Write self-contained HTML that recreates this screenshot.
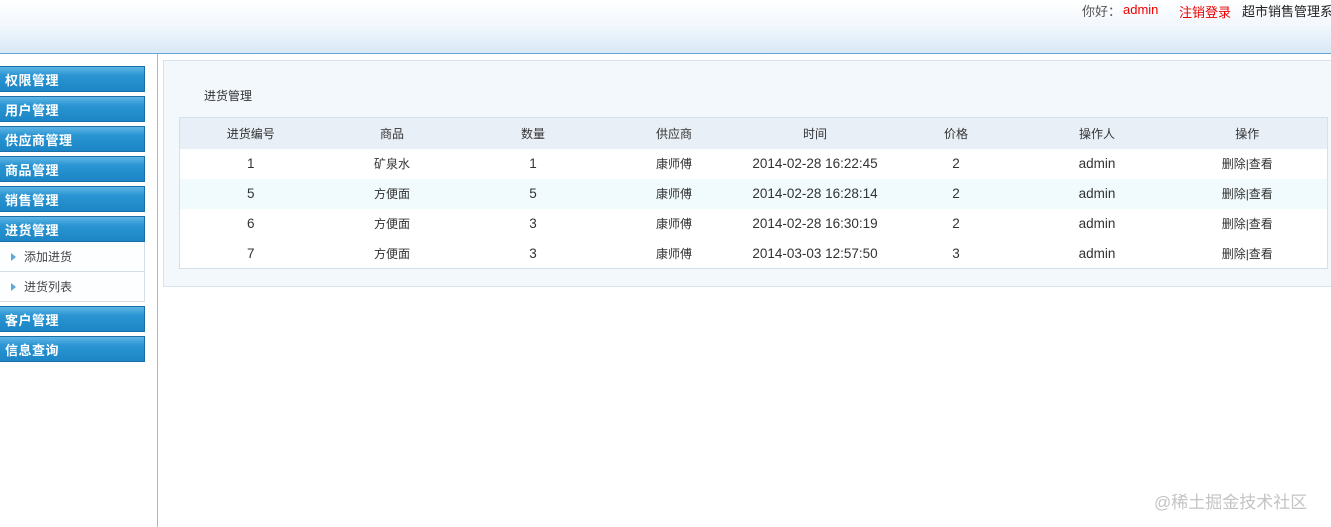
<!DOCTYPE html>
<html><head><meta charset="utf-8"><style>
*{margin:0;padding:0;box-sizing:border-box}
body{width:1331px;height:527px;overflow:hidden;background:#fff;font-family:"Liberation Sans","Noto Sans CJK SC",sans-serif;font-size:12px;color:#333;position:relative}
.hd{position:absolute;left:0;top:0;width:1331px;height:54px;background:linear-gradient(#fff 0%,#f3f8fd 45%,#d9e9f6 100%);border-bottom:1px solid #6aa6d2}
.hd .t{position:absolute;top:1px;font-size:13px;white-space:nowrap}
.side{position:absolute;left:0;top:54px;width:158px;height:473px;border-right:1px solid #8cc0e0;background:#fff}
.m{position:absolute;left:0;width:145px;height:26px;background:linear-gradient(#5fb6e6 0%,#2a95d2 35%,#1c86c6 100%);border:1px solid #1a6fa8;border-left:none;color:#fff;font-weight:bold;font-size:13px;line-height:28px;padding-left:5px;letter-spacing:0.5px}
.s{position:absolute;left:0;width:145px;height:30px;border-bottom:1px solid #d5dde5;border-right:1px solid #d5dde5;line-height:30px;padding-left:24px;color:#444;font-size:12px;background:#fdfeff}
.s:before{content:"";position:absolute;left:11px;top:11px;border-left:5px solid #5aa7d8;border-top:4px solid transparent;border-bottom:4px solid transparent}
.box{position:absolute;left:163px;top:60px;width:1180px;height:227px;background:#f3f8fd;border:1px solid #d6e3ef}
.ttl{position:absolute;left:204px;top:87px;font-size:12px;color:#333}
table{position:absolute;left:179px;top:117px;border-collapse:collapse;border:1px solid #d3e0ee;background:#fff}
td,th{height:30px;text-align:center;font-weight:normal;font-size:12px;color:#333;padding:0}
td.n{font-size:13.5px}
th{height:31px;background:#e9eff7}
tr.c td{background:#f1fbfd}
.wm{position:absolute;left:1154px;top:488px;font-size:17px;color:#c4c4c4}
</style></head><body>
<div class="hd">
<span class="t" style="left:1082px;color:#555">你好：</span>
<span class="t" style="left:1123px;color:#e00;top:2px">admin</span>
<span class="t" style="left:1179px;color:#e00;top:2px">注销登录</span>
<span class="t" style="left:1242px;color:#222">超市销售管理系统</span>
</div>
<div class="side">
<div class="m" style="top:12px">权限管理</div>
<div class="m" style="top:42px">用户管理</div>
<div class="m" style="top:72px">供应商管理</div>
<div class="m" style="top:102px">商品管理</div>
<div class="m" style="top:132px">销售管理</div>
<div class="m" style="top:162px">进货管理</div>
<div class="s" style="top:188px">添加进货</div>
<div class="s" style="top:218px">进货列表</div>
<div class="m" style="top:252px">客户管理</div>
<div class="m" style="top:282px">信息查询</div>
</div>
<div class="box"></div>
<div class="ttl">进货管理</div>
<table>
<colgroup><col style="width:142px"><col style="width:141px"><col style="width:141px"><col style="width:141px"><col style="width:141px"><col style="width:141px"><col style="width:141px"><col style="width:160px"></colgroup>
<tr><th>进货编号</th><th>商品</th><th>数量</th><th>供应商</th><th>时间</th><th>价格</th><th>操作人</th><th>操作</th></tr>
<tr><td class="n">1</td><td>矿泉水</td><td class="n">1</td><td>康师傅</td><td class="n">2014-02-28 16:22:45</td><td class="n">2</td><td class="n">admin</td><td>删除|查看</td></tr>
<tr class="c"><td class="n">5</td><td>方便面</td><td class="n">5</td><td>康师傅</td><td class="n">2014-02-28 16:28:14</td><td class="n">2</td><td class="n">admin</td><td>删除|查看</td></tr>
<tr><td class="n">6</td><td>方便面</td><td class="n">3</td><td>康师傅</td><td class="n">2014-02-28 16:30:19</td><td class="n">2</td><td class="n">admin</td><td>删除|查看</td></tr>
<tr><td class="n">7</td><td>方便面</td><td class="n">3</td><td>康师傅</td><td class="n">2014-03-03 12:57:50</td><td class="n">3</td><td class="n">admin</td><td>删除|查看</td></tr>
</table>
<div class="wm">@稀土掘金技术社区</div>
</body></html>
